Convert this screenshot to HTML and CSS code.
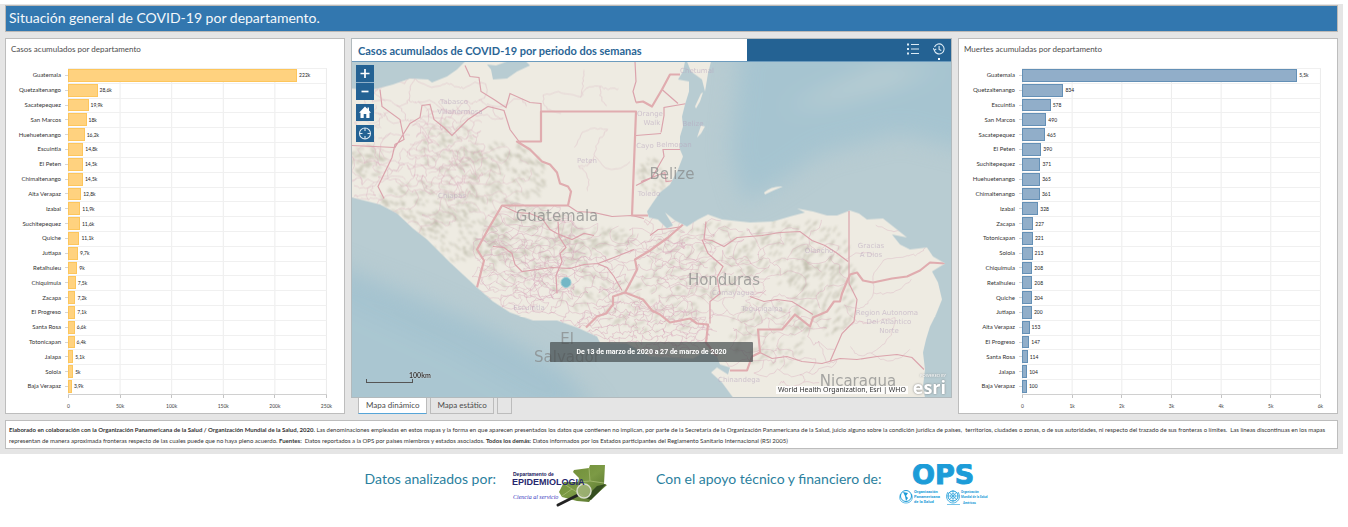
FILE: index.html
```html
<!DOCTYPE html>
<html lang="es">
<head>
<meta charset="utf-8">
<title>Situación general de COVID-19 por departamento</title>
<link rel="stylesheet" href="styles.css">
</head>
<body>
<div class="dashboard">
  <header class="banner"><h1>Situación general de COVID-19 por departamento.</h1></header>
  <main class="panels">
    <section class="panel chart chart-cases">
      <h2 class="panel-title">Casos acumulados por departamento</h2>
      <div class="plot" id="cases"></div>
    </section>

    <section class="center">
      <div class="map-panel">
        <div class="map-head">
          <h2 class="map-title">Casos acumulados de COVID-19 por periodo dos semanas</h2>
          <div class="map-tools">
            <button class="tool" aria-label="Leyenda"><svg width="12" height="12" viewBox="0 0 12 12" fill="none" stroke="#dcebf5"><path d="M4 1.5H12M4 6H12M4 10.500H12"/><path d="M0 1.500H2M0 6H2M0 10.500H2" stroke-width="2"/></svg></button>
            <button class="tool active" aria-label="Tiempo"><svg width="12" height="12" viewBox="0 0 12 12" fill="none" stroke="#dcebf5" stroke-width="1.100"><path d="M1.300 7.300A5 5 0 1 0 1.500 4M.2 5.200 1.400 7.300 3.300 5.900M6.100 3V6.400L8.300 7.600"/></svg></button>
          </div>
        </div>
        <div class="map">
          <svg class="map-art" viewBox="0 0 599 336" preserveAspectRatio="xMidYMid slice" role="img" aria-label="Mapa de Centroamérica">
            <defs>
              <filter id="soft" x="-20%" y="-20%" width="140%" height="140%"><feGaussianBlur stdDeviation="11"/></filter>
              <filter id="relief"><feGaussianBlur stdDeviation="0.800"/></filter>
              <clipPath id="landclip"><use href="#landshape"/></clipPath>
            </defs>
            <rect width="599" height="336" fill="#b8ccd2"/>
            <g filter="url(#soft)" fill="#a6c4d0">
              <path d="M390 -20H630V92L548 72 470 92 420 125 392 140 378 90Z"/>
              <path d="M-30 200 60 232 130 262 215 310 250 370H-30Z" opacity=".75"/>
              <path d="M-20 200 60 238 150 275 215 315 250 350 190 340 100 290 -20 235Z" fill="#9dbfce" opacity=".5"/>
              <path d="M430 48 480 25 530 4 590 5 540 25 480 42Z" fill="#b8cdd3"/>
            </g>
            <path id="landshape" fill="#eeebe2" d="M0 27 15 29 26 27 41 23 58 17 76 18 80 21 95 15 105 8 113 0H333L331 10 326 18 337 20V30L333 43 330 55 331 65 328 75V88L331 95 326 108 318 123 308 131 301 141 295 150 297 156 306 158 315 167 321 164 313 151 323 159 335 165 346 158 356 153 370 158 398 161 421 160 438 155 453 151 445 147 461 150 475 154 485 154 498 149 507 152 515 158 531 157 545 168 555 176 540 173 548 183 558 188 575 186 581 195 593 202 580 210 586 221 590 238 584 253 578 265 574 278 571 291 573 308 571 325 573 336H381L370 321 359 311 365 306 376 313 378 306 368 303 365 295 353 290 341 297 298 295 275 282 248 281 245 275 225 266 205 259 181 259 158 251 141 240 125 226 98 201 75 178 61 167 45 152 28 143 0 136Z"/>
            <path d="M335 0H359L356 12 353 30 350 18 339 10ZM343 45 349 32 351 31 348 40 344 47ZM345 76 349 64 353 65 349 72ZM412 131Q420 124 431 125 421 129 413 133Z" fill="#eeebe2"/>
            <path d="M135 3 144 4 155 0H174L178 4 165 10 155 17 141 18 139 8Z" fill="#b8ccd2"/>
            <g clip-path="url(#landclip)">
              <g id="terrain" fill="none" stroke="#8d8b72" stroke-linecap="round" filter="url(#relief)"></g>
              <g id="mesh" fill="none" stroke="#d6a2b8" stroke-linejoin="round"></g>
              <g fill="none" stroke="#dba3ac" stroke-width="1.200">
                <path d="M28 28 30 45 48 58 52 78 43 83 40 96 26 125 32 137M0 84 43 86 58 62 68 56 70 44 78 43 82 58 92 66 100 74 116 58 136 45 152 49 158 68 167 80M113 4 118 15 127 16 129 30 142 38 154 46 158 32 178 41 189 42V50"/>
                <path d="M283 0 284 20 281 30 284 41M284 74 309 72M309 71 312 54 312 46 335 42M310 28 326 42M284 124 300 116 312 95 311 88 329 88M289 120 313 111 314 120 323 119M497 149V222M298 174 306 168 318 167 330 165M354 160 352 178 360 179 372 185 385 176 410 174 428 171 448 170 460 179 473 184 484 191 496 200M350 178 356 192 371 205 365 216 368 232 358 240 358 262M398 235 412 240 425 238 440 240 461 253M488 297 505 298 525 295 545 293 560 296 572 308M497 222 505 238 502 260 490 272 478 300M408 291 420 297 435 295 450 300 470 302 488 297"/>
                <path d="M141 185 152 186 160 192 163 203 170 210 185 208 200 206 218 207 232 203 246 202 262 196 282 188M245 202 255 206 262 215 270 229M206 160 207 175 214 186 208 192 210 200 204 214 205 232M216 144 225 150 242 151 260 155 280 154 292 157M150 144 165 151 178 152 190 157 198 168 205 172 220 178 232 172 242 174"/>
              </g>
              <g fill="none" stroke="#e0acaf" stroke-width="2.200" stroke-linejoin="round">
                <path d="M125 226 132 199 125 188 136 168 150 144H216L219 130 216 125 208 122 205 111 198 103 190 100 178 88 165 80H189V50H284L280 154H296M284 41 291 40 300 45 310 28 318 13 328 13"/>
                <path d="M331 163 316 176 298 189 283 198 285 208 280 218 273 231 261 235V243L254 252 245 255 234 266M273 231 291 238 300 249 308 253 318 261 338 257 345 262 356 263 354 281 365 295M378 309H395L400 295 408 291 406 268H430L443 253 458 265 461 256 475 250 482 240 488 240 490 232 495 220 498 213 505 211 511 219 521 221 540 217 555 215 568 209 578 201 593 202"/>
              </g>
            </g>
            <g class="place">
              <text x="102" y="42">Tabasco</text><text x="108" y="52">Villahermosa</text><text x="235" y="101">Peten</text><text x="298" y="54">Orange</text><text x="300" y="63">Walk</text><text x="293" y="86">Cayo</text><text x="297" y="134">Toledo</text><text x="345" y="11">Chetumal</text><text x="341" y="64">Belize</text><text x="322" y="85">Belmopan</text><text x="100" y="136">Chiapas</text><text x="519" y="186">Gracias</text><text x="519" y="195">A Dios</text><text x="535" y="253">Region Autonoma</text><text x="537" y="262">Del Atlantico</text><text x="537" y="271">Norte</text><text x="387" y="320">Chinandega</text><text x="177" y="248">Escuintla</text><text x="467" y="191">Olancho</text><text x="381" y="233">Comayagua</text><text x="410" y="249">Tegucigalpa</text>
            </g>
            <g class="country"><text x="205" y="159">Guatemala</text><text x="320" y="117">Belize</text><text x="372" y="223">Honduras</text><text x="215" y="282">El</text><text x="215" y="300">Salvador</text><text x="506" y="324">Nicaragua</text></g>
            <circle cx="214" cy="221" r="5" fill="#74b7c6" stroke="#9acbd2"/>
          </svg>
          <div class="map-nav">
            <div class="zoom">
              <button class="nav" aria-label="Acercar"><svg width="18" height="17" viewBox="0 0 18 17" stroke="#fff" stroke-width="1.700"><path d="M4.500 8.500H13.500M9 4V13"/></svg></button>
              <button class="nav" aria-label="Alejar"><svg width="18" height="17" viewBox="0 0 18 17" stroke="#fff" stroke-width="1.700"><path d="M5.500 8.500H12.500"/></svg></button>
            </div>
            <button class="nav" aria-label="Inicio"><svg width="18" height="17" viewBox="0 0 18 17" fill="#fff"><path d="M9 2.500 3 8.700H4.500V14H7.700V10H10.300V14H13.500V8.700H15L13 6.600V3.500H11.500V5Z"/></svg></button>
            <button class="nav" aria-label="Mi ubicación"><svg width="18" height="17" viewBox="0 0 18 17" fill="none" stroke="#dfeaf3" stroke-width="1.100"><circle cx="9" cy="8.500" r="5.500"/><path d="M9 3V6M9 11V14M3.500 8.500H6.500M11.500 8.500H14.500"/></svg></button>
          </div>
          <div class="scale">
            <span>100km</span>
            <i></i>
          </div>
          <div class="period">De 13 de marzo de 2020 a 27 de marzo de 2020</div>
          <div class="credits">World Health Organization, Esri | WHO</div>
          <div class="esri"><small>POWERED BY</small><b>esri</b></div>
        </div>
      </div>
      <div class="tabs" role="tablist">
        <button class="tab selected" role="tab" aria-selected="true">Mapa dinámico</button>
        <button class="tab" role="tab">Mapa estático</button>
        <button class="tab" role="tab" aria-label="Más"></button>
      </div>
    </section>

    <section class="panel chart chart-deaths">
      <h2 class="panel-title">Muertes acumuladas por departamento</h2>
      <div class="plot" id="deaths"></div>
    </section>
  </main>
  <section class="notes">
    <p><b>Elaborado en colaboración con la Organización Panamericana de la Salud / Organización Mundial de la Salud, 2020.</b> Las denominaciones empleadas en estos mapas y la forma en que aparecen presentados los datos que contienen no implican, por parte de la Secretaría de la Organización Panamericana de la Salud, juicio alguno sobre la condición jurídica de países,&nbsp; territorios, ciudades o zonas, o de sus autoridades, ni respecto del trazado de sus fronteras o límites.&nbsp; Las líneas discontinuas en los mapas<br>representan de manera aproximada fronteras respecto de las cuales puede que no haya pleno acuerdo. <b>Fuentes:</b>&nbsp; Datos reportados a la OPS por países miembros y estados asociados. <b>Todos los demás:</b> Datos informados por los Estados participantes del Reglamento Sanitario Internacional (RSI 2005)</p>
  </section>
</div>

<footer class="credits-bar">
  <div class="sponsor">
    <span>Datos analizados por:</span>
    <svg width="96" height="44" viewBox="0 0 96 44" role="img" aria-label="Departamento de Epidemiología">
      <defs><linearGradient id="gt" x2="1" y2="1"><stop offset="0" stop-color="#6d8a35"/><stop offset=".5" stop-color="#7c9a45"/><stop offset="1" stop-color="#4e6b28"/></linearGradient></defs>
      <path d="M62 6 77 4 78 1H93L92 20 95 21 87 28 80 34 77 38 65 37 50 33 47 28 52 18H66L67 14 61 8Z" fill="url(#gt)"/>
      <path d="M77 4 78 17 67 18M52 20 60 25 50 32M60 25 74 34M78 17 92 19" fill="none" stroke="#9fb56b"/>
      <path d="M85 22 94 20 86 29 79 36 73 34 80 27Z" fill="#354e20"/>
      <path d="M46 41 66 31" stroke="#222" stroke-width="3" stroke-linecap="round"/>
      <circle cx="72" cy="27" r="7" fill="#a8ba82" fill-opacity=".75" stroke="#d9ddcd" stroke-width="1.500"/>
      <text class="epi-small" x="1" y="12">Departamento de</text>
      <text class="epi-big" x="0" y="21">EPIDEMIOLOGIA</text>
      <text class="epi-script" x="1" y="35">Ciencia al servicio</text>
    </svg>
  </div>
  <div class="sponsor">
    <span>Con el apoyo técnico y financiero de:</span>
    <svg width="96" height="44" viewBox="-2 -1 96 44" role="img" aria-label="Organización Panamericana de la Salud">
      <text class="ops" x="13" y="19">OPS</text>
      <g fill="none" stroke="#1c9cd8">
        <circle cx="7" cy="31" r="5.500"/><path d="M1.500 29C-1 35 3 38 7 38S15 35 12.500 29" stroke-width=".7"/>
        <circle cx="54" cy="31" r="5"/><circle cx="54" cy="31" r="2.500" stroke-width=".6"/><path d="M54 25V37M48.500 31H59.500M50 27 58 35M58 27 50 35" stroke-width=".6"/><path d="M49 27C45 33 50 38 54 38S63 33 59 27" stroke-width=".8"/><path d="M48 39.500H61" stroke-width=".6"/>
      </g>
      <path d="M4 27 9 28 7 31 9 33 7 36 6 31Z" fill="#1c9cd8"/>
      <g class="org"><text x="15" y="28">Organización</text><text x="15" y="33">Panamericana</text><text x="15" y="38">de la Salud</text></g>
      <g class="org org-small"><text x="62" y="28">Organización</text><text x="62" y="33">Mundial de la Salud</text><text x="64" y="39">Américas</text></g>
    </svg>
  </div>
</footer>
<script src="app.js"></script>
</body>
</html>
```
FILE: styles.css
```css
* { box-sizing: border-box; }
body {
  margin: 0;
  min-height: 100vh;
  padding-top: 4px;
  display: flex;
  flex-direction: column;
  background: #fff;
  color: #3f3f3f;
  font-family: Lato, "Liberation Sans", sans-serif;
}
h1, h2, p { margin: 0; font-weight: 400; }
button { border: 0; padding: 0; margin: 0; background: none; color: inherit; font: inherit; }
svg { display: block; }

.dashboard {
  flex: 1;
  margin-right: 5px;
  padding: 1px 5px 5px;
  display: flex;
  flex-direction: column;
  gap: 6px;
  background: #e5e5e5;
}
.banner {
  padding: 1px 3px 2px;
  border: 1px solid #bcb9b6;
  background: #3277af;
  color: #f4f8fb;
}
.banner h1 { font-size: 14px; line-height: 22px; }
.panels {
  flex: 1;
  display: grid;
  grid-template-columns: 340fr 601fr 380fr;
  gap: 6px;
}
.panel, .notes { border: 1px solid #bdbdbd; background: #fff; }

.chart { display: flex; flex-direction: column; padding: 4px 5px 3px; }
.panel-title { font-size: 8px; line-height: 12px; color: #4c4c4c; margin-bottom: 13px; }
.plot { flex: 1; display: flex; flex-direction: column; }
.chart-cases .plot { padding-right: 12px; }
.chart-deaths .plot { padding-left: 1px; padding-right: 11px; }
.row { flex: 1; display: grid; grid-template-columns: 57px 1fr; }
.name {
  display: flex;
  align-items: center;
  justify-content: flex-end;
  gap: 4px;
  font-size: 6px;
  line-height: 8px;
  color: #333;
}
.name::after { content: ""; width: 3px; border-top: 1px solid #d5d5d5; }
.track {
  display: flex;
  align-items: center;
  gap: 2px;
  padding-bottom: 1px;
  border-top: 1px solid #f0f0f0;
  border-right: 1px solid #ececec;
  background-image: linear-gradient(to right, #ececec 1px, transparent 1px);
}
.chart-cases .track { background-size: 20% 100%; }
.chart-deaths .track { background-size: calc(100% / 6) 100%; }
.bar { align-self: stretch; flex: none; border: 1px solid; }
.chart-cases .bar { background: #ffd27f; border-color: #fdc65c; }
.chart-deaths .bar { background: #91aec9; border-color: #6490b6; }
.value { font-size: 5px; line-height: 6px; color: #222; }
.axis {
  margin-left: 57px;
  display: flex;
  justify-content: space-between;
  border-top: 1px solid #d0d0d0;
}
.axis span {
  width: 1px;
  display: flex;
  flex-direction: column;
  align-items: center;
  gap: 4px;
  font-size: 5px;
  line-height: 8px;
}
.axis span::before { content: ""; height: 3px; border-left: 1px solid #c4c4c4; }

.center { display: flex; flex-direction: column; min-width: 0; }
.map-panel { flex: 1; display: flex; flex-direction: column; border: 1px solid #b2babd; }
.map-head { display: flex; height: 23px; border-bottom: 1px solid #6c9bbd; background: #246293; }
.map-title {
  flex: 0 0 66%;
  padding-left: 6px;
  background: #fff;
  color: #2a6595;
  font-size: 11px;
  line-height: 23px;
  font-weight: 700;
}
.map-tools { flex: 1; display: flex; justify-content: flex-end; gap: 14px; padding-right: 6px; }
.tool { position: relative; display: grid; place-items: start center; padding-top: 4px; }
.tool.active::after {
  content: "";
  position: absolute;
  left: 5px;
  bottom: 1px;
  width: 2px;
  height: 2px;
  background: #fff;
}
.map { position: relative; flex: 1; overflow: hidden; }
.map-art { position: absolute; width: 100%; height: 100%; }
.country { fill: #858686; font: 15px "DejaVu Sans", sans-serif; text-anchor: middle; opacity: .7; }
.place { fill: #b6a3bd; font: 7px "DejaVu Sans", sans-serif; text-anchor: middle; opacity: .55; }
.map-nav { position: absolute; top: 3px; left: 4px; display: grid; gap: 4px; }
.zoom { display: grid; gap: 1px; background: #8eafc8; }
.nav { display: block; background: #246293; }
.scale { position: absolute; left: 14px; bottom: 14px; width: 64px; }
.scale span { display: block; margin-left: 43px; font-size: 7px; font-weight: 700; line-height: 8px; color: #333; text-shadow: 0 0 1px #fff; }
.scale i { display: block; width: 47px; height: 4px; border: 1px solid #555; border-top: 0; }
.period {
  position: absolute;
  left: 33%;
  bottom: 35px;
  width: 34%;
  border-radius: 1px;
  background: rgb(72 79 80 / 72%);
  color: #fff;
  font: 700 7px/20px Roboto, sans-serif;
  text-align: center;
}
.credits {
  position: absolute;
  right: 43px;
  bottom: 3px;
  padding: 0 2px;
  background: rgb(255 255 255 / 85%);
  color: #323232;
  font: 7px/8px "Noto Sans", sans-serif;
}
.esri { position: absolute; right: 5px; bottom: 1px; color: #fff; text-shadow: 0 0 2px #777; text-align: right; }
.esri small { display: block; font-size: 4px; line-height: 4px; }
.esri b { display: block; font: 700 18px/18px "Open Sans", sans-serif; }
.tabs { display: flex; gap: 3px; padding: 0 7px; }
.tab {
  min-width: 15px;
  height: 16px;
  padding: 0 6px;
  border: 1px solid #bcbcbc;
  border-top: 0;
  color: #4c4c4c;
  font-size: 8px;
  line-height: 15px;
}
.tab.selected { padding: 0 7px; background: #fff; border-bottom-color: #56a5d8; }

.notes { padding: 3px 3px 2px; }
.notes p { font-size: 6px; line-height: 11px; color: #333; white-space: nowrap; }

.credits-bar {
  display: flex;
  justify-content: center;
  gap: 48px;
  padding: 10px 0 19px 10px;
  color: #2b7f9e;
}
.sponsor { display: flex; align-items: flex-start; gap: 16px; font-size: 14px; line-height: 30px; }
.epi-small { font: 700 5px "Liberation Sans", sans-serif; fill: #20205c; }
.epi-big { font: 700 9px "Liberation Sans", sans-serif; fill: #27276d; }
.epi-script { font: italic 6px "Liberation Serif", serif; fill: #3535c0; }
.ops { font: 700 27px "DejaVu Sans", sans-serif; fill: #1c9cd8; stroke: #1c9cd8; }
.org { font: 700 4px Roboto, sans-serif; fill: #1c9cd8; }
.org-small { font-size: 3px; }
```
FILE: app.js
```js
const cases = [["Guatemala",222,"222k"],["Quetzaltenango",28.6,"28,6k"],["Sacatepequez",19.9,"19,9k"],["San Marcos",18,"18k"],["Huehuetenango",16.2,"16,2k"],["Escuintla",14.8,"14,8k"],["El Peten",14.5,"14,5k"],["Chimaltenango",14.5,"14,5k"],["Alta Verapaz",12.8,"12,8k"],["Izabal",11.9,"11,9k"],["Suchitepequez",11.6,"11,6k"],["Quiche",11.1,"11,1k"],["Jutiapa",9.7,"9,7k"],["Retalhuleu",9,"9k"],["Chiquimula",7.5,"7,5k"],["Zacapa",7.2,"7,2k"],["El Progreso",7.1,"7,1k"],["Santa Rosa",6.6,"6,6k"],["Totonicapan",6.4,"6,4k"],["Jalapa",5.1,"5,1k"],["Solola",5,"5k"],["Baja Verapaz",3.9,"3,9k"]];
const deaths = [["Guatemala",5540,"5,5k"],["Quetzaltenango",834],["Escuintla",578],["San Marcos",490],["Sacatepequez",465],["El Peten",390],["Suchitepequez",371],["Huehuetenango",365],["Chimaltenango",361],["Izabal",328],["Zacapa",227],["Totonicapan",221],["Solola",213],["Chiquimula",208],["Retalhuleu",208],["Quiche",204],["Jutiapa",200],["Alta Verapaz",153],["El Progreso",147],["Santa Rosa",114],["Jalapa",104],["Baja Verapaz",100]];

function drawChart(id, data, max, ticks) {
  const rows = data.map(([name, n, label = n]) =>
    `<div class="row"><span class="name">${name}</span><div class="track"><span class="bar" style="width:${n / max * 100}%"></span><span class="value">${label}</span></div></div>`);
  const axis = ticks.map(t => `<span>${t}</span>`).join("");
  document.getElementById(id).innerHTML = rows.join("") + `<div class="axis">${axis}</div>`;
}
drawChart("cases", cases, 250, ["0", "50k", "100k", "150k", "200k", "250k"]);
drawChart("deaths", deaths, 6000, ["0", "1k", "2k", "3k", "4k", "5k", "6k"]);

// Seeded generator, so that the map texture is stable between loads.
let seed = 7;
const rnd = () => (seed = (seed * 16807) % 2147483647) / 2147483647;

// Municipal boundaries: a jittered lattice inside each ellipse [cx, cy, rx, ry, cell, opacity].
const meshAreas = [[95,90,42,52,8,.5],[60,120,60,60,14,.5],[20,110,35,40,12,.45],[130,120,55,40,11,.4],[90,38,90,26,17,.5],[20,50,20,26,9,.45],[225,25,52,30,24,.45],[245,105,42,48,32,.45],[180,195,62,60,10,.55],[165,215,46,38,7,.45],[225,225,50,42,9,.55],[210,175,80,30,13,.45],[290,270,75,32,6,.6],[300,215,60,45,9,.55],[360,215,60,60,11,.5],[440,200,65,55,17,.5],[430,285,60,50,13,.5],[530,230,55,90,32,.45],[320,180,50,26,10,.5]];
let mesh = "";
for (const [cx, cy, rx, ry, s, o] of meshAreas) {
  const nx = Math.ceil(rx / s), ny = Math.ceil(ry / s), pts = {};
  for (let j = -ny; j <= ny; j++) for (let i = -nx; i <= nx; i++)
    pts[i + "," + j] = [cx + (i + (j & 1) / 2 + (rnd() - .5) * .9) * s, cy + (j + (rnd() - .5) * .9) * s];
  const inside = p => ((p[0] - cx) / rx) ** 2 + ((p[1] - cy) / ry) ** 2 < 1;
  let d = "";
  const link = (a, b) => {
    if (!a || !b || !inside(a) || !inside(b) || rnd() < .12) return;
    d += `M${a[0].toFixed(1)} ${a[1].toFixed(1)}`;
    const steps = Math.max(4, Math.round(s / 2.5));
    // Side bow keeps long edges from running straight.
    const bow = (rnd() - .5) * .6;
    for (let n = 1; n <= steps; n++) {
      const t = n / steps, k = n < steps ? 2.2 : 0, c = Math.sin(t * Math.PI) * bow * (n < steps);
      const dx = b[0] - a[0], dy = b[1] - a[1];
      d += `L${(a[0] + dx * t - dy * c + (rnd() - .5) * k).toFixed(1)} ${(a[1] + dy * t + dx * c + (rnd() - .5) * k).toFixed(1)}`;
    }
  };
  for (let j = -ny; j <= ny; j++) for (let i = -nx; i <= nx; i++) {
    link(pts[i + "," + j], pts[(i + 1) + "," + j]);
    if ((i + j) & 1) link(pts[i + "," + j], pts[i + "," + (j + 1)]);
  }
  mesh += `<path d="${d}" stroke-width=".7" opacity="${o}"/>`;
}
document.getElementById("mesh").innerHTML = mesh;

// Mountain relief: short ridges [cx, cy, rx, ry, count, slope].
const ridges = [[95,85,30,28,90,.8],[150,112,42,32,170,.9],[75,140,50,22,110,.6],[110,170,45,28,150,.6],[15,100,20,16,60,.4],[180,175,45,28,130,-.3],[165,205,35,22,50,.8],[240,180,42,16,90,-.4],[300,112,16,16,30,.8],[350,200,55,38,140,-.7],[440,190,55,32,130,-1],[465,235,42,42,120,-1.2],[415,275,40,35,80,-.9],[300,245,50,30,80,-.6],[225,215,30,30,60,.7]];
let terrain = "";
for (const [cx, cy, rx, ry, n, slope] of ridges) {
  let d = "";
  for (let i = 0; i < n; i++) {
    const a = rnd() * 6.28, r = Math.sqrt(rnd()), len = 1 + rnd() * 4, m = slope + (rnd() - .5) * 1.2;
    const x = cx + Math.cos(a) * r * rx, y = cy + Math.sin(a) * r * ry;
    d += `M${x.toFixed(1)} ${y.toFixed(1)}q${(len / 2).toFixed(1)} ${(len * m / 2 + rnd() * 2 - 1).toFixed(1)} ${len.toFixed(1)} ${(len * m).toFixed(1)}`;
  }
  terrain += `<path d="${d}" stroke-width="1.200" opacity=".42"/>`;
}
document.getElementById("terrain").innerHTML = terrain;
```
